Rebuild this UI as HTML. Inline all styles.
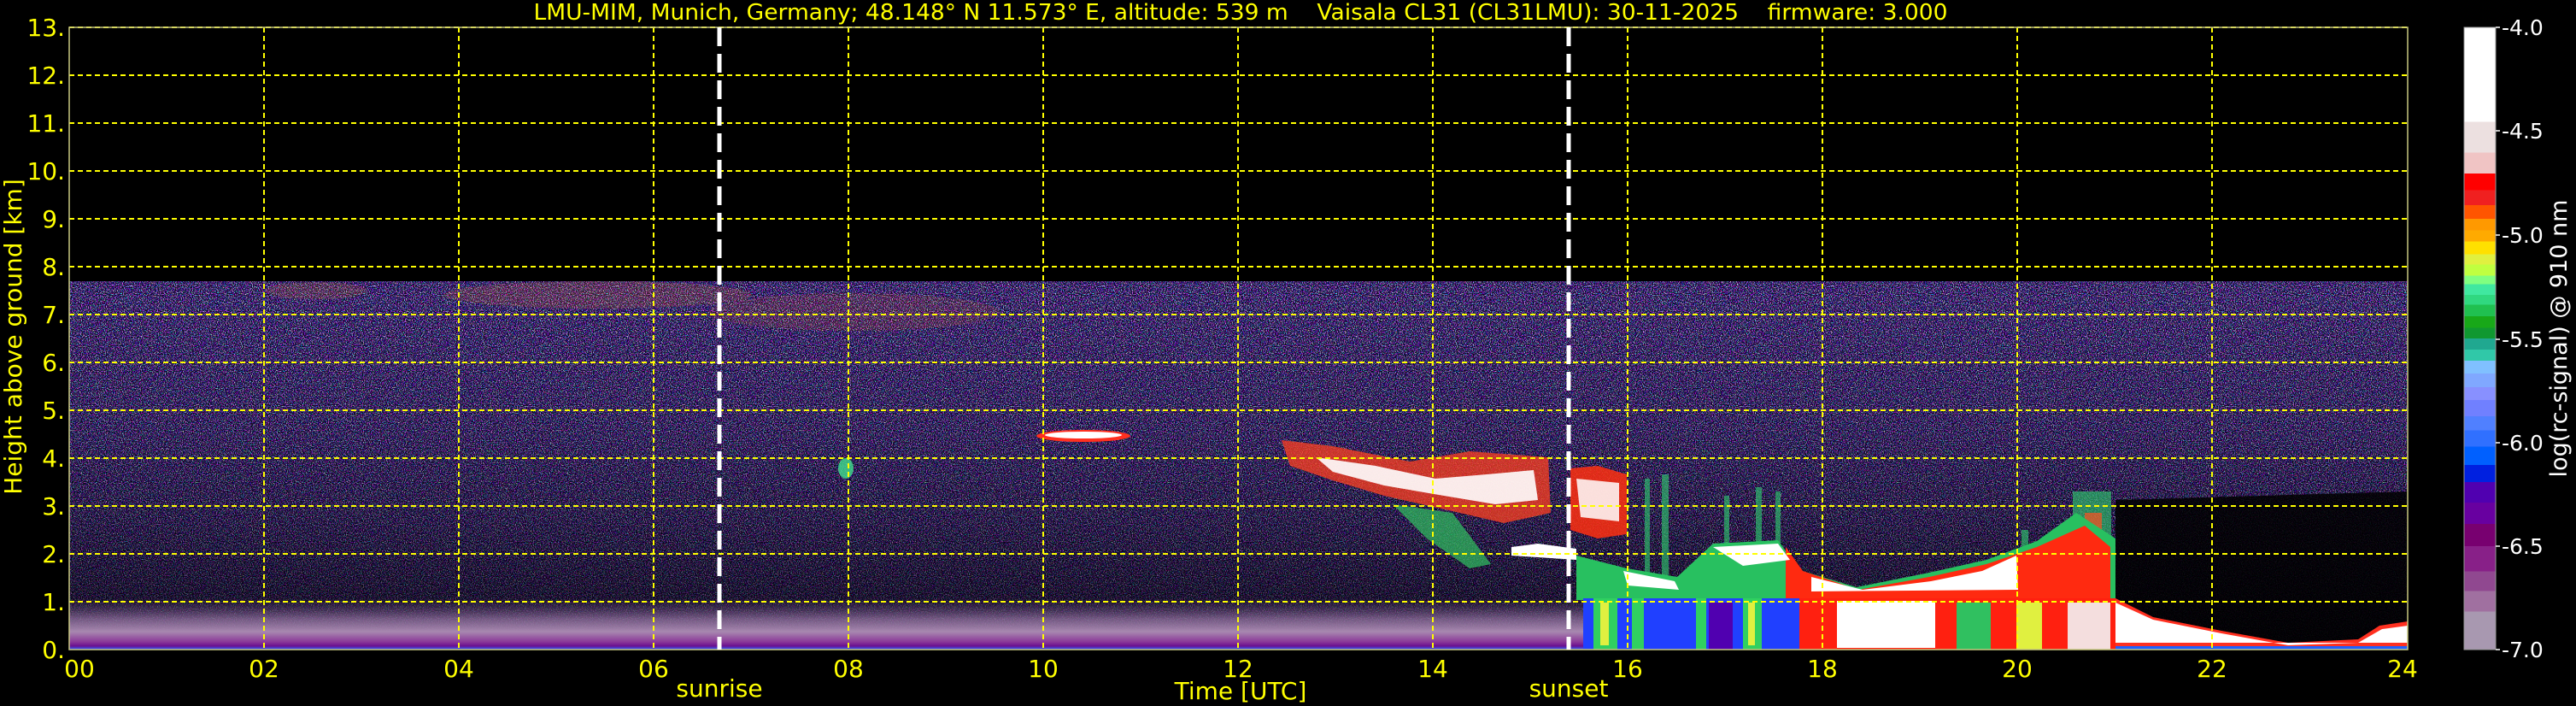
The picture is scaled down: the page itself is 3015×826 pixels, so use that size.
<!DOCTYPE html>
<html><head><meta charset="utf-8">
<style>
html,body{margin:0;padding:0;background:#000;width:3015px;height:826px;overflow:hidden}
svg{display:block}
text{font-family:"DejaVu Sans","Liberation Sans",sans-serif}
</style></head>
<body>
<svg width="3015" height="826" viewBox="0 0 3015 826" xmlns="http://www.w3.org/2000/svg">
<defs>
<filter id="nz" x="0" y="0" width="100%" height="100%" filterUnits="objectBoundingBox">
<feTurbulence type="fractalNoise" baseFrequency="0.9" numOctaves="1" seed="7"/>
<feColorMatrix type="matrix" values="3.6 0 0 0 -1.45  0 3.6 0 0 -1.6  0 0 3.6 0 -0.85  0 0 0 4.5 -1.85"/>
</filter>
<linearGradient id="dim" x1="0" y1="0" x2="0" y2="1">
<stop offset="0" stop-color="#000" stop-opacity="0.05"/>
<stop offset="0.4" stop-color="#000" stop-opacity="0.18"/>
<stop offset="0.65" stop-color="#000" stop-opacity="0.35"/>
<stop offset="0.85" stop-color="#000" stop-opacity="0.55"/>
<stop offset="1" stop-color="#000" stop-opacity="0.7"/>
</linearGradient>
<linearGradient id="haze" x1="0" y1="0" x2="0" y2="1">
<stop offset="0" stop-color="#6a4a80" stop-opacity="0"/>
<stop offset="0.4" stop-color="#9a78a8" stop-opacity="0.7"/>
<stop offset="0.65" stop-color="#a888b0"/>
<stop offset="0.85" stop-color="#8a3898"/>
<stop offset="0.93" stop-color="#6a1090"/>
<stop offset="1" stop-color="#3060ff"/>
</linearGradient>
<linearGradient id="cb" x1="0" y1="0" x2="0" y2="1">
<stop offset="0" stop-color="#fff"/><stop offset="0.152" stop-color="#fff"/>
<stop offset="0.152" stop-color="#ece0e0"/><stop offset="0.201" stop-color="#ece0e0"/>
<stop offset="0.201" stop-color="#f0c4c4"/><stop offset="0.235" stop-color="#f0c4c4"/>
<stop offset="0.235" stop-color="#ff0000"/><stop offset="0.262" stop-color="#ff0000"/>
<stop offset="0.262" stop-color="#f02020"/><stop offset="0.286" stop-color="#f02020"/>
<stop offset="0.286" stop-color="#ff5500"/><stop offset="0.308" stop-color="#ff5500"/>
<stop offset="0.308" stop-color="#ff9900"/><stop offset="0.326" stop-color="#ff9900"/>
<stop offset="0.326" stop-color="#ffaa00"/><stop offset="0.344" stop-color="#ffaa00"/>
<stop offset="0.344" stop-color="#ffe000"/><stop offset="0.365" stop-color="#ffe000"/>
<stop offset="0.365" stop-color="#e0f040"/><stop offset="0.381" stop-color="#e0f040"/>
<stop offset="0.381" stop-color="#c0ff40"/><stop offset="0.399" stop-color="#c0ff40"/>
<stop offset="0.399" stop-color="#80ff80"/><stop offset="0.413" stop-color="#80ff80"/>
<stop offset="0.413" stop-color="#40e8a0"/><stop offset="0.430" stop-color="#40e8a0"/>
<stop offset="0.430" stop-color="#30d880"/><stop offset="0.446" stop-color="#30d880"/>
<stop offset="0.446" stop-color="#20c050"/><stop offset="0.464" stop-color="#20c050"/>
<stop offset="0.464" stop-color="#18a818"/><stop offset="0.483" stop-color="#18a818"/>
<stop offset="0.483" stop-color="#109830"/><stop offset="0.500" stop-color="#109830"/>
<stop offset="0.500" stop-color="#20a890"/><stop offset="0.518" stop-color="#20a890"/>
<stop offset="0.518" stop-color="#30c8a8"/><stop offset="0.536" stop-color="#30c8a8"/>
<stop offset="0.536" stop-color="#80c0ff"/><stop offset="0.556" stop-color="#80c0ff"/>
<stop offset="0.556" stop-color="#80a8ff"/><stop offset="0.578" stop-color="#80a8ff"/>
<stop offset="0.578" stop-color="#8890ff"/><stop offset="0.599" stop-color="#8890ff"/>
<stop offset="0.599" stop-color="#7080ff"/><stop offset="0.625" stop-color="#7080ff"/>
<stop offset="0.625" stop-color="#5080ff"/><stop offset="0.648" stop-color="#5080ff"/>
<stop offset="0.648" stop-color="#3070ff"/><stop offset="0.674" stop-color="#3070ff"/>
<stop offset="0.674" stop-color="#0060ff"/><stop offset="0.703" stop-color="#0060ff"/>
<stop offset="0.703" stop-color="#0020e0"/><stop offset="0.731" stop-color="#0020e0"/>
<stop offset="0.731" stop-color="#5000b0"/><stop offset="0.764" stop-color="#5000b0"/>
<stop offset="0.764" stop-color="#6800a0"/><stop offset="0.798" stop-color="#6800a0"/>
<stop offset="0.798" stop-color="#780070"/><stop offset="0.834" stop-color="#780070"/>
<stop offset="0.834" stop-color="#882088"/><stop offset="0.874" stop-color="#882088"/>
<stop offset="0.874" stop-color="#904890"/><stop offset="0.906" stop-color="#904890"/>
<stop offset="0.906" stop-color="#a070a0"/><stop offset="0.939" stop-color="#a070a0"/>
<stop offset="0.939" stop-color="#a898b0"/><stop offset="1" stop-color="#a898b0"/>
</linearGradient>
</defs>

<!-- data speckle -->
<rect x="81" y="329" width="2737" height="431" fill="#0c0820"/>
<rect x="81" y="329" width="2737" height="431" filter="url(#nz)"/>
<rect x="81" y="329" width="2737" height="431" fill="url(#dim)"/>
<!-- orange streaks near top -->
<ellipse cx="700" cy="345" rx="180" ry="16" fill="#ff8030" opacity="0.16"/>
<ellipse cx="1000" cy="365" rx="170" ry="22" fill="#ff7030" opacity="0.13"/>
<ellipse cx="370" cy="340" rx="60" ry="10" fill="#ff9030" opacity="0.15"/>
<!-- dark area after 21h -->
<polygon points="2476,585 2818,575 2818,760 2476,760" fill="#000" opacity="0.85"/>
<!-- low haze -->
<rect x="81" y="700" width="1775" height="60" fill="url(#haze)"/>

<!-- sunrise-side small features -->
<ellipse cx="990" cy="548" rx="9" ry="12" fill="#40e090" opacity="0.8"/>
<ellipse cx="1268" cy="510" rx="55" ry="7" fill="#ff3020"/>
<ellipse cx="1268" cy="509" rx="45" ry="4" fill="#fff"/>

<!-- main afternoon cloud -->
<polygon points="1630,590 1700,600 1745,660 1720,665 1670,630" fill="#30c060" opacity="0.7"/>
<polygon points="1500,515 1560,522 1650,540 1720,528 1812,535 1815,600 1760,612 1700,598 1620,580 1560,562 1510,545" fill="#ff4020" opacity="0.75"/>
<polygon points="1540,535 1610,545 1680,560 1740,555 1795,550 1800,585 1750,590 1690,580 1620,568 1560,552" fill="#fff" opacity="0.9"/>
<polygon points="1769,640 1800,636 1845,642 1845,655 1800,652 1769,650" fill="#fff"/>

<!-- after sunset upper cloud -->
<polygon points="1838,548 1870,545 1904,555 1904,625 1870,630 1838,620" fill="#ff3010" opacity="0.85"/>
<polygon points="1845,560 1895,565 1895,610 1850,605" fill="#fff" opacity="0.85"/>
<!-- thin columns -->
<g fill="#30d070" opacity="0.6">
<rect x="1925" y="560" width="6" height="120"/>
<rect x="1945" y="555" width="8" height="130"/>
<rect x="2018" y="580" width="6" height="100"/>
<rect x="2055" y="570" width="7" height="110"/>
<rect x="2078" y="575" width="6" height="100"/>
<rect x="2426" y="575" width="45" height="110"/>
<rect x="2366" y="620" width="8" height="60"/>
</g>
<rect x="2440" y="600" width="20" height="80" fill="#ff5020" opacity="0.7"/>
<!-- mid layer -->
<polygon points="1845,650 1904,665 1963,675 2005,636 2081,632 2106,667 2173,687 2258,670 2325,655 2384,633 2430,600 2476,630 2476,702 1845,702" fill="#28c060"/>
<polygon points="2090,640 2110,668 2175,690 2258,675 2325,660 2384,640 2440,615 2470,640 2470,700 2090,700" fill="#ff2a10"/>
<polygon points="2005,640 2081,636 2095,655 2040,662" fill="#fff"/>
<polygon points="2120,675 2180,690 2260,680 2320,668 2360,650 2362,690 2120,692" fill="#fff"/>
<polygon points="1900,668 1960,680 1965,690 1905,685" fill="#fff"/>
<!-- low layer -->
<rect x="1853" y="700" width="253" height="60" fill="#2040ff"/>
<g fill="#30d060">
<rect x="1865" y="700" width="28" height="60"/><rect x="1910" y="700" width="14" height="60"/>
<rect x="1985" y="700" width="12" height="60"/><rect x="2040" y="700" width="22" height="60"/>
</g>
<g fill="#e0f040"><rect x="1873" y="705" width="10" height="50"/><rect x="2046" y="705" width="8" height="50"/></g>
<rect x="2000" y="705" width="28" height="55" fill="#5000b0"/>
<rect x="2106" y="700" width="370" height="60" fill="#ff2010"/>
<rect x="2150" y="703" width="115" height="55" fill="#fff"/>
<rect x="2290" y="705" width="40" height="55" fill="#30c060"/>
<rect x="2360" y="705" width="30" height="55" fill="#e0f040"/>
<rect x="2420" y="705" width="50" height="55" fill="#f4dede"/>
<!-- after 21h white wedge -->
<polygon points="2476,700 2520,722 2600,738 2678,752 2760,748 2785,732 2818,727 2818,760 2476,760" fill="#ff3020"/>
<polygon points="2476,705 2520,725 2600,741 2678,755 2760,752 2788,736 2818,732 2818,752 2476,752" fill="#fff"/>
<rect x="2476" y="756" width="342" height="4" fill="#2060ff"/>

<!-- grid -->
<g stroke="#ffff00" stroke-width="2" stroke-dasharray="6,4" fill="none">
<line x1="81" y1="704" x2="2818" y2="704"/><line x1="81" y1="648" x2="2818" y2="648"/>
<line x1="81" y1="592" x2="2818" y2="592"/><line x1="81" y1="536" x2="2818" y2="536"/>
<line x1="81" y1="480" x2="2818" y2="480"/><line x1="81" y1="424" x2="2818" y2="424"/>
<line x1="81" y1="368" x2="2818" y2="368"/><line x1="81" y1="312" x2="2818" y2="312"/>
<line x1="81" y1="256" x2="2818" y2="256"/><line x1="81" y1="200" x2="2818" y2="200"/>
<line x1="81" y1="144" x2="2818" y2="144"/><line x1="81" y1="88" x2="2818" y2="88"/>
<line x1="81" y1="32" x2="2818" y2="32"/>
<line x1="309" y1="32" x2="309" y2="760"/><line x1="537" y1="32" x2="537" y2="760"/>
<line x1="765" y1="32" x2="765" y2="760"/><line x1="993" y1="32" x2="993" y2="760"/>
<line x1="1221" y1="32" x2="1221" y2="760"/><line x1="1449" y1="32" x2="1449" y2="760"/>
<line x1="1677" y1="32" x2="1677" y2="760"/><line x1="1905" y1="32" x2="1905" y2="760"/>
<line x1="2133" y1="32" x2="2133" y2="760"/><line x1="2361" y1="32" x2="2361" y2="760"/>
<line x1="2589" y1="32" x2="2589" y2="760"/>
</g>
<rect x="81" y="32" width="2737" height="728" fill="none" stroke="#c8c880" stroke-width="1.5"/>
<!-- sunrise / sunset -->
<g stroke="#fff" stroke-width="5" stroke-dasharray="22,9">
<line x1="842" y1="32" x2="842" y2="760"/><line x1="1836" y1="32" x2="1836" y2="760"/>
</g>

<!-- text -->
<g fill="#ffff00" font-size="28">
<text x="1452" y="23" text-anchor="middle" font-size="26" textLength="1655" lengthAdjust="spacingAndGlyphs" xml:space="preserve">LMU-MIM, Munich, Germany; 48.148° N 11.573° E, altitude: 539 m    Vaisala CL31 (CL31LMU): 30-11-2025    firmware: 3.000</text>
<g text-anchor="end">
<text x="76" y="770">0.</text><text x="76" y="714">1.</text><text x="76" y="658">2.</text>
<text x="76" y="602">3.</text><text x="76" y="546">4.</text><text x="76" y="490">5.</text>
<text x="76" y="434">6.</text><text x="76" y="378">7.</text><text x="76" y="322">8.</text>
<text x="76" y="266">9.</text><text x="76" y="210">10.</text><text x="76" y="154">11.</text>
<text x="76" y="98">12.</text><text x="76" y="42">13.</text>
</g>
<g text-anchor="middle">
<text x="93" y="792">00</text><text x="309" y="792">02</text><text x="537" y="792">04</text>
<text x="765" y="792">06</text><text x="993" y="792">08</text><text x="1221" y="792">10</text>
<text x="1449" y="792">12</text><text x="1677" y="792">14</text><text x="1905" y="792">16</text>
<text x="2133" y="792">18</text><text x="2361" y="792">20</text><text x="2589" y="792">22</text>
<text x="2812" y="792">24</text>
<text x="842" y="815">sunrise</text><text x="1836" y="815">sunset</text>
<text x="1452" y="818">Time [UTC]</text>
</g>
<text transform="translate(25,394) rotate(-90)" text-anchor="middle">Height above ground [km]</text>
</g>

<!-- colorbar -->
<rect x="2884" y="32" width="37" height="728" fill="url(#cb)" stroke="#999" stroke-width="1"/>
<g fill="#fff" font-size="25">
<text x="2928" y="41">-4.0</text><text x="2928" y="162">-4.5</text><text x="2928" y="284">-5.0</text>
<text x="2928" y="406">-5.5</text><text x="2928" y="527">-6.0</text><text x="2928" y="648">-6.5</text>
<text x="2928" y="769">-7.0</text>
<text transform="translate(3004,396) rotate(-90)" text-anchor="middle" font-size="27">log(rc-signal) @ 910 nm</text>
</g>
<g stroke="#fff" stroke-width="1.5">
<line x1="2921" y1="32" x2="2926" y2="32"/><line x1="2921" y1="153" x2="2926" y2="153"/>
<line x1="2921" y1="275" x2="2926" y2="275"/><line x1="2921" y1="397" x2="2926" y2="397"/>
<line x1="2921" y1="518" x2="2926" y2="518"/><line x1="2921" y1="639" x2="2926" y2="639"/>
<line x1="2921" y1="760" x2="2926" y2="760"/>
</g>
</svg>
</body></html>
